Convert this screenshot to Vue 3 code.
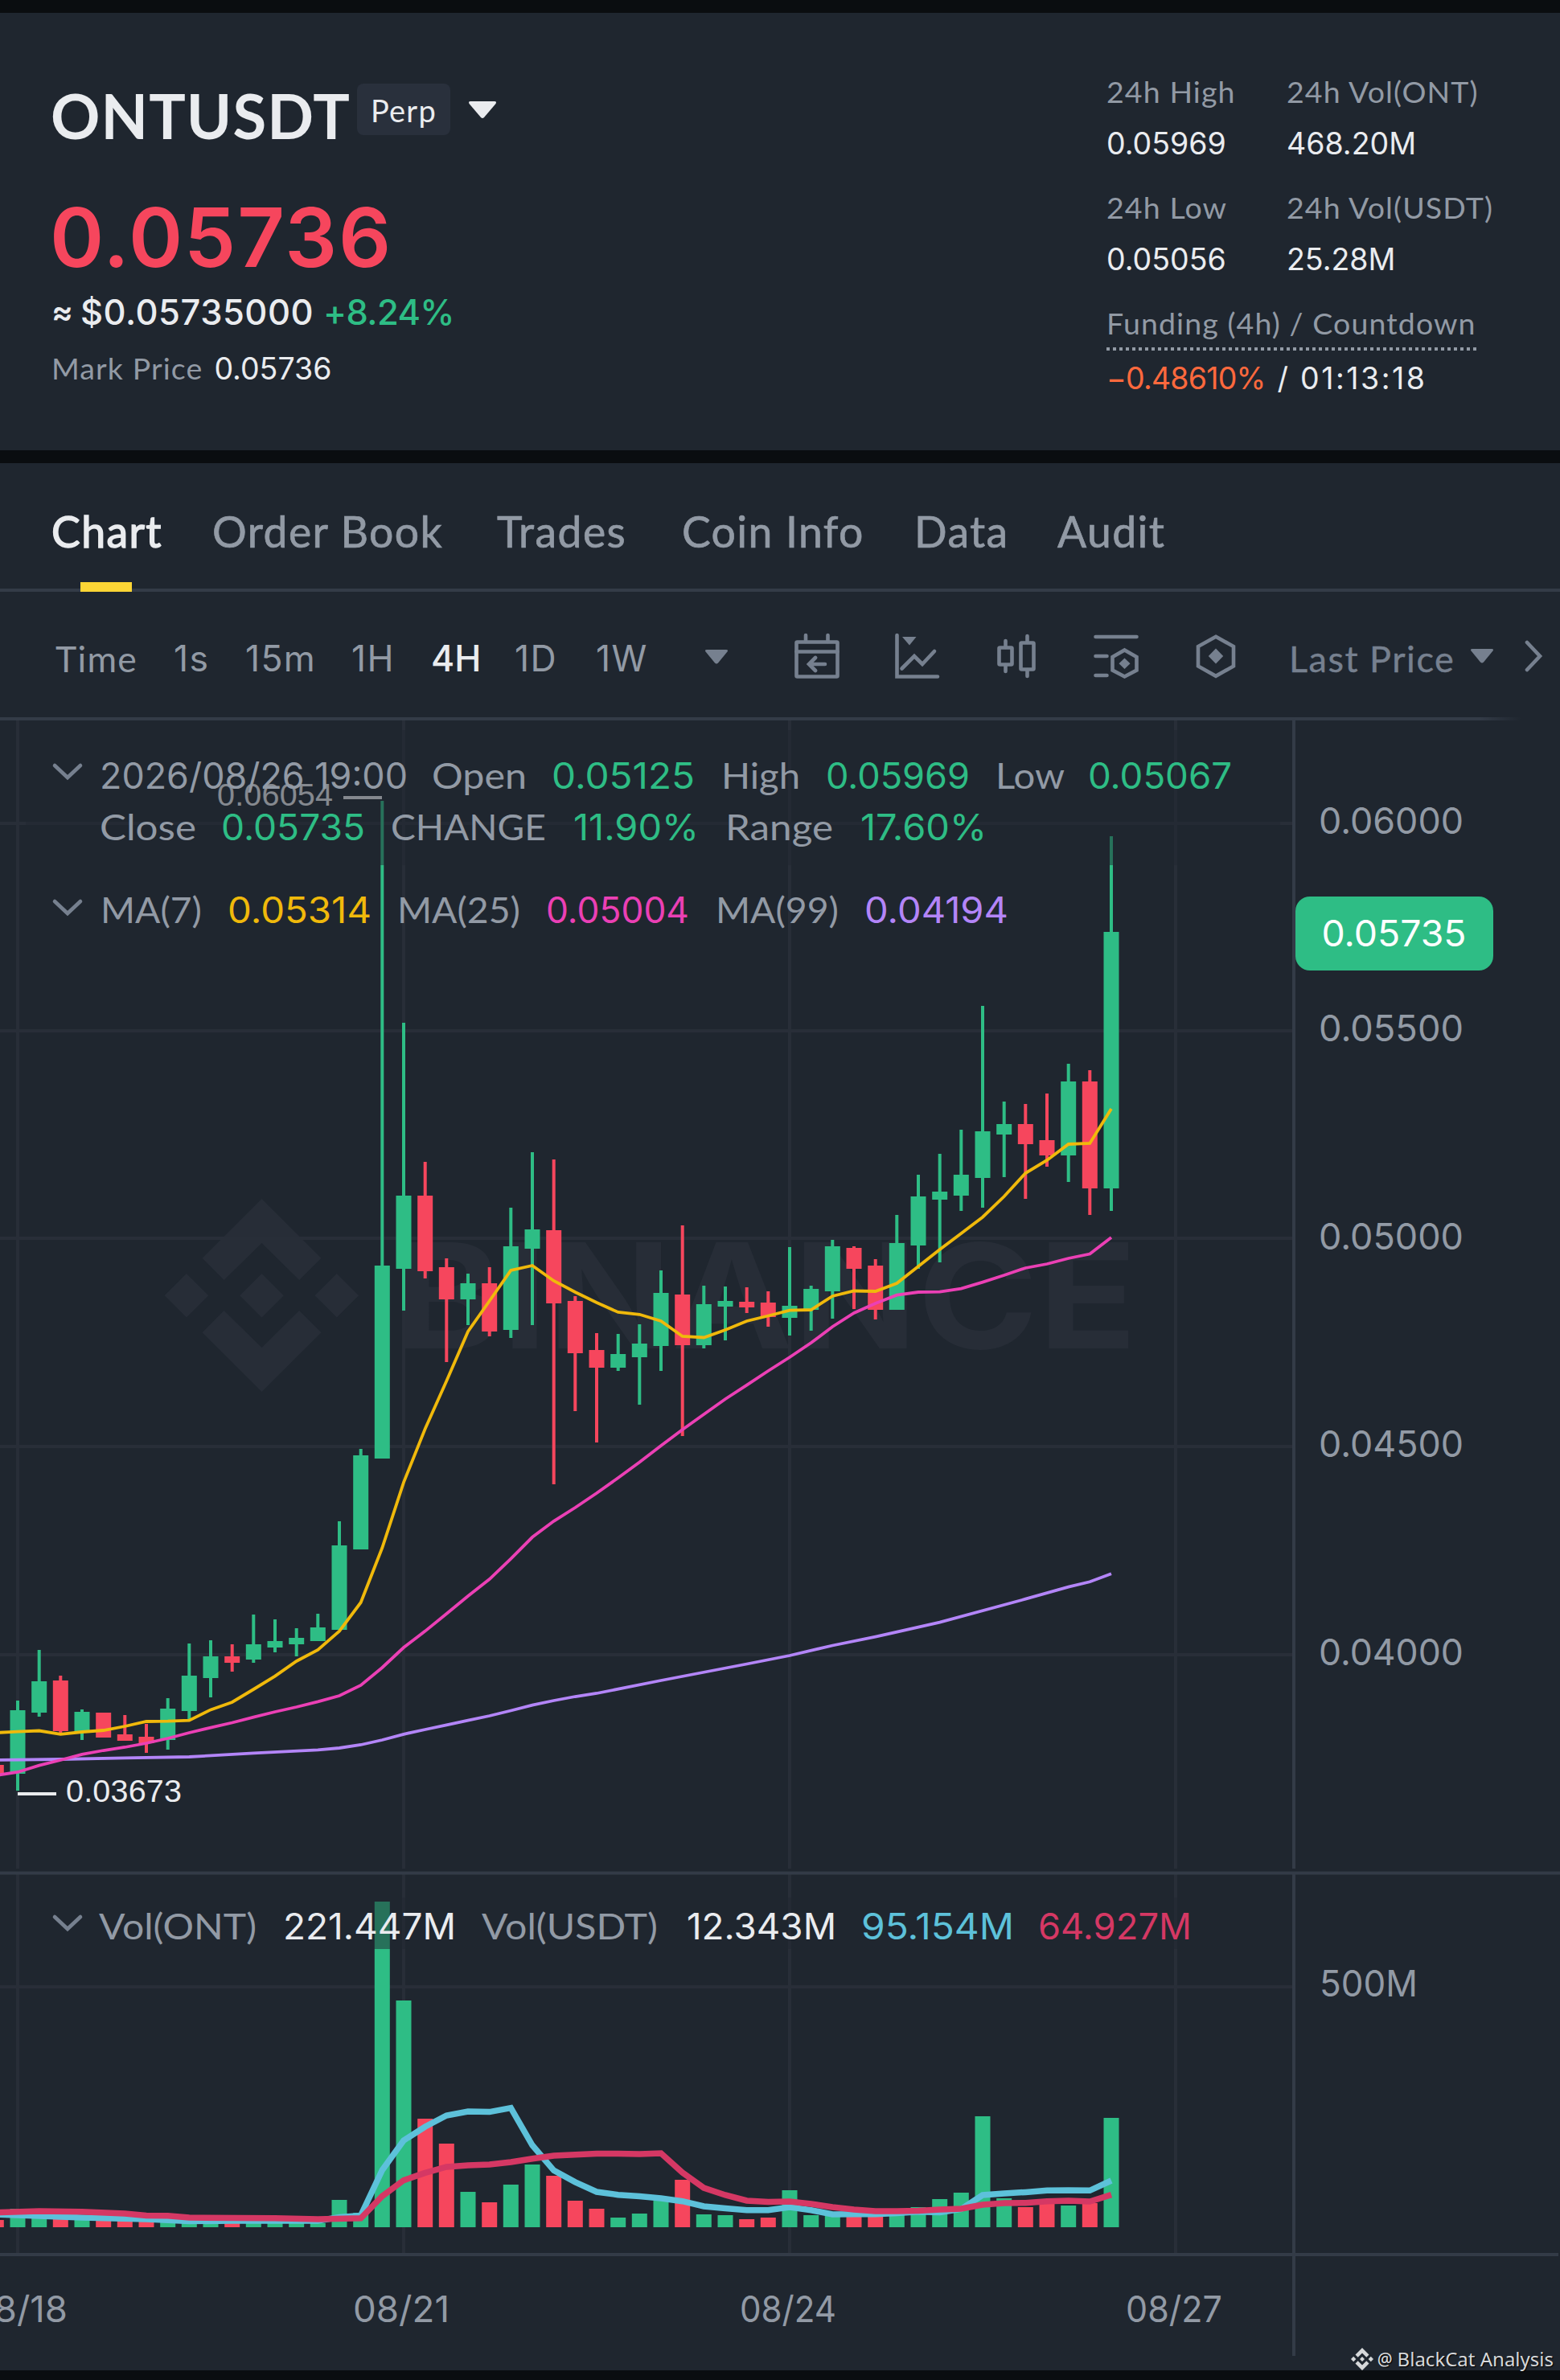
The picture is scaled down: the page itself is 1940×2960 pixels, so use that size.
<template>
  <div class="page">
    <header class="ticker">
      <div class="summary">
        <div class="title-row">
          <h1>ONTUSDT</h1>
          <span class="badge">Perp</span>
          <svg class="title-caret" viewBox="0 0 36 24"><path d="M3 1h30q3 0 1.500 3L20 21q-2 2-4 0L1.500 4Q0 1 3 1z" /></svg>
        </div>
        <div class="last-price">0.05736</div>
        <div class="usd-price">
          <span class="approx">≈</span><span>$0.05735000</span><span class="up">+8.24%</span>
        </div>
        <div class="mark-price"><span class="muted">Mark Price</span><span class="num">0.05736</span></div>
      </div>

      <div class="stats">
        <div v-for="s in stats" :key="s.label" class="stat">
          <div class="muted">{{ s.label }}</div>
          <div class="num">{{ s.value }}</div>
        </div>
        <div class="funding">
          <div class="muted dotted">Funding (4h) / Countdown</div>
          <div class="num countdown"><span class="negative">−0.48610%</span><span>/</span><span class="clock">01:13:18</span></div>
        </div>
      </div>
    </header>

    <nav class="tabs">
      <span v-for="tab in tabs" :key="tab" class="tab" :class="{ active: tab === 'Chart' }">{{ tab }}</span>
    </nav>

    <div class="toolbar">
      <div class="intervals">
        <span v-for="t in intervals" :key="t.label" :class="[t.kind, { selected: t.label === '4H' }]">{{ t.label }}</span>
        <svg class="caret" viewBox="0 0 28 18"><path d="M2 0h24q3 0 1.500 2.500L16 16.500q-2 2-4 0L.5 2.500Q-1 0 2 0z" /></svg>
      </div>
      <div class="tools">
        <svg class="icon" viewBox="0 0 60 60">
          <rect x="4.500" y="12.500" width="51" height="43" rx="1" />
          <path d="M4.500 24.500h51M16 4v8M43.500 4v8M40 40H20M28 32l-8 8 8 8" />
        </svg>
        <svg class="icon" viewBox="0 0 60 60">
          <path d="M5.500 4v51.500H56M11.500 45.500L27 30l10 10 15-16" />
          <path class="solid" d="M12 6h17.500L21 16.500z" />
        </svg>
        <svg class="icon" viewBox="0 0 60 60">
          <rect x="8.500" y="19.500" width="16" height="21" rx="1" />
          <rect x="35.500" y="13.500" width="16" height="33" rx="1" />
          <path d="M16.500 11v8M16.500 41v8M43.500 5v8M43.500 47v8" />
        </svg>
        <svg class="icon" viewBox="0 0 60 60">
          <path d="M4.500 6h51M4.500 30h14M4.500 54h14M40.500 22.500L55.500 31v16.500l-15 8-15-8V31z" />
          <path class="solid" d="M40.500 32.500l7 6.800-7 6.800-7-6.800z" />
        </svg>
        <svg class="icon" viewBox="0 0 60 60">
          <path d="M30 5.800L52 18v24.500L30 54.800 8 42.500V18z" />
          <path class="solid" d="M30 20.500l9.200 9.500-9.200 9.500-9.200-9.500z" />
        </svg>
        <span class="price-type">Last Price</span>
        <svg class="caret" viewBox="0 0 28 18"><path d="M2 0h24q3 0 1.500 2.500L16 16.500q-2 2-4 0L.5 2.500Q-1 0 2 0z" /></svg>
        <svg class="more" viewBox="0 0 24 40"><path d="M4 3l16 17L4 37" /></svg>
      </div>
    </div>

    <svg class="chart" viewBox="0 896 1940 2052">
      <!-- watermark -->
      <g class="watermark">
        <path d="M325.500 1491l74 73.700-27.400 27.300-46.600-46-46.900 46-27.100-27.300z" />
        <path d="M325.500 1731l74-73.700-27.400-27.300-46.600 46-46.900-46-27.100 27.300z" />
        <path d="M325.500 1584l27.300 27.300-27.300 27.300-27.300-27.300zM231.900 1584l27.300 27.300-27.300 27.300-27.300-27.300zM418.800 1584l27.300 27.300-27.300 27.300-27.300-27.300z" />
        <text x="490" y="1677" textLength="924" lengthAdjust="spacingAndGlyphs" font-size="181">BINANCE</text>
      </g>

      <!-- grid -->
      <g class="grid">
        <path v-for="x in gridX" :key="x" :d="`M${x} 896V2324M${x} 2331V2802`" />
        <path v-for="y in gridY" :key="y" :d="`M0 ${y}H1607`" />
      </g>

      <!-- candles -->
      <g v-for="c in candles" :key="c.x" :class="c.up ? 'green' : 'red'">
        <rect :x="c.x - 2" :y="c.high" width="4" :height="c.low - c.high" />
        <rect :x="c.x - 9.500" :y="c.top" width="19" :height="c.bottom - c.top" />
        <rect :x="c.x - 9.500" :y="c.vol" width="19" :height="2770 - c.vol" />
      </g>

      <polyline class="line" :points="ma99" stroke="#b385f8" />
      <polyline class="line" :points="ma25" stroke="#eb40b5" />
      <polyline class="line" :points="ma7" stroke="#f0b90b" />
      <polyline class="vol-line" :points="volMa5" stroke="#5dc1da" />
      <polyline class="vol-line" :points="volMa10" stroke="#d53864" />

      <!-- period high and low -->
      <g class="extreme">
        <text x="270" y="1002" textLength="144">0.06054</text>
        <rect x="427" y="990" width="48" height="4" />
        <text x="82" y="2241" textLength="144">0.03673</text>
        <rect x="22" y="2229" width="48" height="4" />
      </g>

      <rect class="legend-bg" x="32" y="908" width="1560" height="168" />
      <rect class="legend-bg" x="32" y="2360" width="1560" height="64" />

      <!-- frame -->
      <g class="frame">
        <path d="M1609 896V2324M1609 2331V2930M0 2329.500H1940M0 2804H1938" />
      </g>

      <g class="chevrons">
        <path v-for="y in [952, 1121, 2384]" :key="y" :d="`M68 ${y}l16 15 16-15`" />
      </g>
      <text
        v-for="t in legend"
        :key="t.text + t.x"
        :class="t.font"
        :x="t.x - 2"
        :y="t.y + 0.800"
        :textLength="t.end - t.x + 4"
        lengthAdjust="spacingAndGlyphs"
        :fill="t.fill"
        font-size="44.500"
      >{{ t.text }}</text>

      <g class="axis">
        <text v-for="p in prices" :key="p.text" x="1640" :y="p.y" textLength="180" lengthAdjust="spacingAndGlyphs">{{ p.text }}</text>
        <text x="1641" y="2483" textLength="122" lengthAdjust="spacingAndGlyphs">500M</text>
        <text v-for="d in dates" :key="d.text" :x="d.x" y="2888" textLength="120" lengthAdjust="spacingAndGlyphs">{{ d.text }}</text>
      </g>

      <rect x="1611" y="1115" width="246" height="92" rx="18" class="green" />
      <text class="num" x="1643.500" y="1177" textLength="180" lengthAdjust="spacingAndGlyphs" font-size="45" fill="#fff">0.05735</text>
    </svg>

    <div class="signature">
      <svg viewBox="0 0 28 28">
        <path d="M14 0l8.500 8.500-3.200 3.200L14 6.400l-5.300 5.300-3.200-3.200zM14 28l8.500-8.500-3.200-3.200-5.300 5.300-5.300-5.300-3.200 3.200zM14 11l3 3-3 3-3-3zM3.200 10.800L6.400 14l-3.200 3.200L0 14zM24.800 10.800L28 14l-3.200 3.200-3.200-3.200z" />
      </svg>
      <span class="at">@</span><span>BlackCat Analysis</span>
    </div>
  </div>
</template>

<script setup>
const stats = [
  { label: '24h High', value: '0.05969' },
  { label: '24h Vol(ONT)', value: '468.20M' },
  { label: '24h Low', value: '0.05056' },
  { label: '24h Vol(USDT)', value: '25.28M' }
]

const tabs = ['Chart', 'Order Book', 'Trades', 'Coin Info', 'Data', 'Audit']

const intervals = [
  { label: 'Time', kind: 'word' },
  { label: '1s', kind: 'num' },
  { label: '15m', kind: 'num' },
  { label: '1H', kind: 'num' },
  { label: '4H', kind: 'num' },
  { label: '1D', kind: 'num' },
  { label: '1W', kind: 'num' }
]

const gridX = [22, 502, 982, 1462]
const gridY = [1024, 1282, 1540, 1799, 2058, 2471]

const step = 480 / 18
const xAt = (i) => +(22 + i * step).toFixed(1)

// up, high, body top, body bottom, low, volume bar top
const rows = [
  [0, 2195, 2195, 2206, 2206, 2761],
  [1, 2115, 2127, 2206, 2227, 2747],
  [1, 2052, 2091, 2130, 2135, 2758],
  [0, 2084, 2090, 2153, 2155, 2760],
  [1, 2126, 2129, 2154, 2164, 2760],
  [0, 2130, 2130, 2161, 2161, 2762],
  [0, 2133, 2157, 2165, 2165, 2762],
  [0, 2144, 2160, 2168, 2180, 2762],
  [1, 2112, 2125, 2164, 2176, 2763],
  [1, 2044, 2084, 2128, 2138, 2764],
  [1, 2040, 2060, 2087, 2111, 2764],
  [0, 2045, 2060, 2068, 2079, 2764],
  [1, 2008, 2045, 2064, 2068, 2763],
  [1, 2014, 2041, 2049, 2055, 2763],
  [1, 2025, 2037, 2045, 2060, 2763],
  [1, 2007, 2024, 2041, 2041, 2765],
  [1, 1892, 1922, 2027, 2027, 2736],
  [1, 1802, 1810, 1927, 1927, 2752],
  [1, 996, 1574, 1814, 1814, 2365],
  [1, 1272, 1487, 1578, 1630, 2488],
  [0, 1445, 1487, 1581, 1590, 2635],
  [0, 1565, 1576, 1616, 1694, 2666],
  [1, 1584, 1596, 1616, 1648, 2726],
  [0, 1576, 1596, 1656, 1662, 2739],
  [1, 1502, 1550, 1654, 1664, 2717],
  [1, 1433, 1529, 1553, 1648, 2692],
  [0, 1442, 1530, 1621, 1846, 2706],
  [0, 1612, 1618, 1683, 1755, 2737],
  [0, 1658, 1679, 1701, 1794, 2747],
  [1, 1659, 1684, 1701, 1705, 2758],
  [1, 1647, 1671, 1688, 1747, 2753],
  [1, 1580, 1608, 1674, 1705, 2737],
  [0, 1524, 1610, 1673, 1786, 2711],
  [1, 1599, 1622, 1673, 1677, 2754],
  [1, 1600, 1618, 1625, 1667, 2755],
  [0, 1601, 1619, 1626, 1633, 2760],
  [0, 1606, 1620, 1638, 1650, 2758],
  [1, 1551, 1624, 1639, 1661, 2724],
  [1, 1599, 1603, 1629, 1655, 2755],
  [1, 1542, 1550, 1606, 1640, 2755],
  [0, 1550, 1552, 1578, 1628, 2756],
  [0, 1566, 1574, 1629, 1641, 2756],
  [1, 1511, 1546, 1629, 1629, 2753],
  [1, 1461, 1488, 1549, 1578, 2745],
  [1, 1435, 1482, 1492, 1570, 2735],
  [1, 1405, 1461, 1487, 1506, 2727],
  [1, 1251, 1407, 1465, 1502, 2632],
  [1, 1370, 1398, 1411, 1464, 2734],
  [0, 1373, 1398, 1423, 1491, 2745],
  [0, 1360, 1418, 1437, 1451, 2740],
  [1, 1323, 1345, 1437, 1470, 2743],
  [0, 1331, 1345, 1478, 1511, 2740],
  [1, 1040, 1159, 1478, 1506, 2634]
]
const candles = rows.map(([up, high, top, bottom, low, vol], i) => ({
  x: xAt(i - 1), up, high, top, bottom, low, vol
}))

// one value per candle, starting at the one cut off by the left edge
const series = (ys) => ys.map((y, i) => `${xAt(i - 1)},${y}`).join(' ')
// [candle index, y] pairs for the smoother lines
const sparse = (pts) => pts.map(([i, y]) => `${xAt(i)},${y}`).join(' ')

const ma7 = series([
  2155, 2153.6, 2152.5, 2156.8, 2154, 2152, 2147, 2141, 2140.7, 2139.6, 2126.4, 2117, 2101, 2084.6,
  2066, 2052, 2028.6, 1993, 1925, 1843.6, 1777, 1717.5, 1656, 1618, 1580, 1574, 1593, 1607, 1620,
  1632, 1634.8, 1643, 1662, 1663.5, 1654, 1643, 1636.5, 1629.6, 1629, 1612, 1605.5, 1606, 1596,
  1575, 1554, 1534, 1513.7, 1488, 1459, 1443, 1423, 1422, 1379
])
const ma25 = series([
  2208, 2204, 2195.7, 2189, 2181.8, 2177, 2173, 2168, 2162, 2155, 2148.6, 2142.5, 2135.7, 2129,
  2123, 2116.4, 2109, 2096, 2074, 2049, 2028.6, 2007, 1985, 1964, 1938.6, 1911.8, 1891.8, 1875,
  1857, 1838, 1818.6, 1798, 1778, 1759, 1740, 1722.6, 1705, 1688, 1670, 1650, 1633, 1621, 1610.7,
  1607, 1606.7, 1602.6, 1594.6, 1586, 1577, 1572, 1565, 1559.6, 1539
])
const ma99 = sparse([
  [-1, 2189], [2, 2188], [5, 2186.4], [8, 2185], [11, 2180.4], [14, 2176.4], [15, 2174], [16, 2170],
  [17, 2164], [18, 2156.8], [19, 2151], [20, 2145.4], [21, 2139.6], [22, 2134], [23, 2127.5],
  [24, 2120.7], [25, 2115], [26, 2110], [27, 2106], [30, 2090], [34, 2069.5], [36, 2059],
  [38, 2046.5], [40, 2035.7], [43, 2017.7], [47, 1988.7], [49, 1973.7], [50, 1967.3], [51, 1957.3]
])
const volMa5 = sparse([
  [-1, 2754], [1, 2756], [3, 2758], [6, 2760], [8, 2762.6], [10, 2762], [14, 2762], [15, 2757.5],
  [16, 2755.4], [17, 2699], [18, 2662], [19, 2645], [20, 2631], [21, 2626], [22, 2626.6],
  [23, 2621.6], [24, 2668], [25, 2699.4], [26, 2713.8], [27, 2726], [28, 2729.7], [29, 2731.4],
  [30, 2734], [31, 2737.7], [32, 2744], [33, 2746.6], [34, 2748.7], [35, 2748.7], [36, 2745],
  [37, 2748.7], [38, 2754], [39, 2753.7], [40, 2753.7], [41, 2752.5], [42, 2750.8], [43, 2751.6],
  [44, 2747.4], [45, 2730], [46, 2728], [47, 2726.4], [48, 2724.3], [49, 2724], [50, 2724.3], [51, 2712]
])
const volMa10 = sparse([
  [-1, 2751.6], [1, 2750], [3, 2750.8], [5, 2753], [6, 2755.4], [7, 2755.8], [8, 2758], [12, 2758.8],
  [14, 2760], [16, 2758.8], [17, 2731.4], [18, 2711.6], [19, 2702.4], [20, 2695], [21, 2693],
  [22, 2692], [23, 2689], [24, 2684.7], [25, 2681], [26, 2679.7], [27, 2678.4], [28, 2678.4],
  [29, 2679], [30, 2678], [31, 2702], [32, 2721], [33, 2730], [34, 2737], [35, 2738.6], [36, 2738],
  [37, 2741], [38, 2745], [39, 2748], [40, 2750], [41, 2750], [42, 2749.5], [43, 2748], [44, 2747],
  [45, 2742], [46, 2740], [47, 2739.8], [48, 2737.7], [49, 2737], [50, 2738], [51, 2729.7]
])

const gray = '#929aa5'
const green = '#2ebd85'
const legend = [
  { text: '2026/08/26 19:00', x: 126, end: 505, y: 980, fill: gray, font: 'num' },
  { text: 'Open', x: 539, end: 653, y: 980, fill: gray, font: 'word' },
  { text: '0.05125', x: 688, end: 862, y: 980, fill: green, font: 'num' },
  { text: 'High', x: 899, end: 993, y: 980, fill: gray, font: 'word' },
  { text: '0.05969', x: 1029, end: 1204, y: 980, fill: green, font: 'num' },
  { text: 'Low', x: 1240, end: 1322, y: 980, fill: gray, font: 'word' },
  { text: '0.05067', x: 1355, end: 1530, y: 980, fill: green, font: 'num' },
  { text: 'Close', x: 126, end: 242, y: 1044, fill: gray, font: 'word' },
  { text: '0.05735', x: 277, end: 452, y: 1044, fill: green, font: 'num' },
  { text: 'CHANGE', x: 488, end: 677, y: 1044, fill: gray, font: 'word' },
  { text: '11.90%', x: 715, end: 867, y: 1044, fill: green, font: 'num' },
  { text: 'Range', x: 904, end: 1034, y: 1044, fill: gray, font: 'word' },
  { text: '17.60%', x: 1072, end: 1225, y: 1044, fill: green, font: 'num' },
  { text: 'MA(7)', x: 127, end: 249, y: 1147, fill: gray, font: 'word' },
  { text: '0.05314', x: 285, end: 460, y: 1147, fill: '#f0b90b', font: 'num' },
  { text: 'MA(25)', x: 496, end: 645, y: 1147, fill: gray, font: 'word' },
  { text: '0.05004', x: 681, end: 855, y: 1147, fill: '#eb40b5', font: 'num' },
  { text: 'MA(99)', x: 892, end: 1041, y: 1147, fill: gray, font: 'word' },
  { text: '0.04194', x: 1077, end: 1252, y: 1147, fill: '#b385f8', font: 'num' },
  { text: 'Vol(ONT)', x: 125, end: 317, y: 2411, fill: gray, font: 'word' },
  { text: '221.447M', x: 354, end: 565, y: 2411, fill: '#eaecef', font: 'num' },
  { text: 'Vol(USDT)', x: 601, end: 816, y: 2411, fill: gray, font: 'word' },
  { text: '12.343M', x: 856, end: 1038, y: 2411, fill: '#eaecef', font: 'num' },
  { text: '95.154M', x: 1073, end: 1259, y: 2411, fill: '#5dc1da', font: 'num' },
  { text: '64.927M', x: 1293, end: 1480, y: 2411, fill: '#d53864', font: 'num' }
]

const prices = [
  { text: '0.06000', y: 1036.5 },
  { text: '0.05500', y: 1295 },
  { text: '0.05000', y: 1553.5 },
  { text: '0.04500', y: 1812 },
  { text: '0.04000', y: 2070.5 }
]

const dates = [
  { text: '08/18', x: -36 },
  { text: '08/21', x: 439 },
  { text: '08/24', x: 920 },
  { text: '08/27', x: 1400 }
]
</script>

<style>
body {
  margin: 0;
  background: #0a0d10;
}
</style>

<style scoped>
.page {
  position: relative;
  display: flex;
  flex-direction: column;
  width: 1940px;
  height: 2960px;
  overflow: hidden;
  box-sizing: border-box;
  padding-top: 16px;
  background: #0a0d10;
  color: #eaecef;
  font-family: Lato, sans-serif;
}
.num {
  font-family: Inter, sans-serif;
}
.word {
  font-family: Lato, sans-serif;
}
.muted {
  color: #929aa5;
  letter-spacing: 1.1px;
}
.up {
  color: #2ebd85;
}
.negative {
  color: #ff693d;
}

.ticker {
  display: flex;
  justify-content: space-between;
  box-sizing: border-box;
  height: 544px;
  padding: 83px 78px 0 63px;
  background: #1f262f;
}
.title-row {
  display: flex;
  align-items: flex-start;
  height: 90px;
}
h1 {
  margin: 0;
  width: 381px;
  font-size: 76px;
  font-weight: 700;
  line-height: 90px;
  letter-spacing: 1.1px;
}
.badge {
  width: 116px;
  height: 64px;
  margin-top: 5px;
  border-radius: 8px;
  background: #29303c;
  font-size: 38px;
  line-height: 67px;
  text-align: center;
  letter-spacing: 1.2px;
}
.title-caret {
  width: 36px;
  height: 24px;
  margin: 26px 0 0 22px;
  fill: #eaecef;
}
.last-price {
  margin-top: 50px;
  margin-left: -1px;
  font-family: Inter, sans-serif;
  font-size: 102px;
  font-weight: 600;
  line-height: 112px;
  letter-spacing: 1.9px;
  color: #f6465d;
}
.usd-price {
  display: flex;
  margin-top: 9px;
  padding-left: 1px;
  font-family: Inter, sans-serif;
  font-size: 43.5px;
  font-weight: 500;
  line-height: 56px;
}
.usd-price span {
  letter-spacing: 0.5px;
}
.usd-price .approx {
  width: 36px;
  font-size: 40px;
  font-weight: 600;
}
.usd-price .up {
  margin-left: 12px;
  letter-spacing: -0.6px;
}
.mark-price {
  display: flex;
  align-items: baseline;
  gap: 14px;
  margin-top: 18px;
  padding-left: 1px;
  font-size: 37.5px;
  line-height: 48px;
}

.stats {
  display: grid;
  grid-template-columns: 224px 260px;
  grid-auto-rows: 112px;
  row-gap: 32px;
  width: 484px;
  margin: -9px 2px 0 0;
  font-size: 37.5px;
  line-height: 48px;
}
.stats .num {
  margin-top: 17px;
}
.funding {
  grid-column: 1 / 3;
  width: 460px;
}
.dotted {
  padding-bottom: 10px;
  background: repeating-linear-gradient(90deg, #929aa5 0 4px, transparent 4px 8px) 0 100% / 100% 4px no-repeat;
}
.stats .countdown {
  display: flex;
  gap: 15px;
  margin-top: 11px;
}
.countdown .negative {
  letter-spacing: -0.8px;
}
.countdown .clock {
  letter-spacing: 2.5px;
}

.tabs {
  position: relative;
  display: grid;
  grid-template-columns: 200px 354px 230px 289px 178px 1fr;
  box-sizing: border-box;
  height: 160px;
  margin-top: 16px;
  padding: 52px 0 0 64px;
  border-bottom: 4px solid #333b47;
  background: #1f262f;
  font-size: 53.5px;
  line-height: 64px;
  letter-spacing: 1.4px;
  color: #929aa5;
}
.tab {
  -webkit-text-stroke: 0.7px currentColor;
}
.tab.active {
  position: relative;
  color: #eaecef;
  -webkit-text-stroke: 1.4px currentColor;
}
.tab.active::after {
  content: '';
  position: absolute;
  left: 36px;
  bottom: -4px;
  width: 64px;
  height: 12px;
  background: #fcd535;
}

.toolbar {
  position: relative;
  display: flex;
  align-items: center;
  box-sizing: border-box;
  height: 160px;
  background: #1f262f;
}
.toolbar::after {
  content: '';
  position: absolute;
  left: 0;
  bottom: 0;
  width: 1892px;
  height: 4px;
  background: linear-gradient(90deg, #333b47 1840px, transparent);
}
.intervals {
  display: grid;
  grid-template-columns: 147px 89px 132px 99px 104px 101px 136px 28px;
  align-items: center;
  padding-left: 69px;
  margin-top: 6px;
  font-size: 44.5px;
  line-height: 56px;
  letter-spacing: 1.3px;
  color: #929aa5;
}
.intervals .selected {
  color: #eaecef;
  font-weight: 500;
  letter-spacing: 0;
}
.caret {
  width: 28px;
  height: 18px;
  margin-bottom: 4px;
  fill: #76808f;
}
.tools {
  display: flex;
  align-items: center;
  gap: 64px;
  margin-left: 81px;
}
.icon {
  flex: none;
  width: 60px;
  height: 60px;
  fill: none;
  stroke: #76808f;
  stroke-width: 4.6;
  stroke-linecap: round;
}
.icon .solid {
  fill: #76808f;
  stroke: none;
}
.price-type {
  width: 226px;
  margin-right: -64px;
  margin-left: -3px;
  margin-top: 5px;
  font-size: 45px;
  line-height: 56px;
  letter-spacing: 1.5px;
  white-space: nowrap;
  color: #76808f;
  -webkit-text-stroke: 0.4px #76808f;
}
.tools .caret {
  margin-right: -26px;
  margin-bottom: 0;
}
.more {
  width: 24px;
  height: 40px;
  fill: none;
  stroke: #76808f;
  stroke-width: 4.6;
  stroke-linecap: round;
}

.chart {
  display: block;
  flex: none;
  width: 1940px;
  height: 2052px;
  background: #1f262f;
}
.watermark {
  fill: #272d37;
  font-family: Inter, sans-serif;
  font-weight: 700;
}
.grid path {
  fill: none;
  stroke: #282e38;
  stroke-width: 4;
}
.frame path {
  fill: none;
  stroke: #333b47;
  stroke-width: 4;
}
.green {
  fill: #2ebd85;
}
.red {
  fill: #f6465d;
}
.line {
  fill: none;
  stroke-width: 3.8;
}
.vol-line {
  fill: none;
  stroke-width: 7.5;
}
.extreme {
  fill: #eaecef;
  font-family: 'Liberation Sans', Arial, sans-serif;
  font-size: 39.5px;
}
.legend-bg {
  fill: #1f262f;
  fill-opacity: 0.5;
}
.chevrons path {
  fill: none;
  stroke: #76808f;
  stroke-width: 4.6;
  stroke-linecap: round;
}
.axis {
  fill: #929aa5;
  font-family: Inter, sans-serif;
  font-size: 45px;
}

.signature {
  position: absolute;
  right: 8px;
  bottom: 7px;
  display: flex;
  align-items: center;
  font-family: 'Noto Sans', sans-serif;
  font-size: 24px;
  line-height: 38px;
  color: #d6d8da;
  text-shadow: 1px 1px 1px #000;
}
.signature svg {
  width: 28px;
  height: 28px;
  margin-right: 5px;
  fill: #d6d8da;
}
.signature .at {
  margin-right: 6px;
  font-size: 21px;
  font-weight: 500;
}
</style>
